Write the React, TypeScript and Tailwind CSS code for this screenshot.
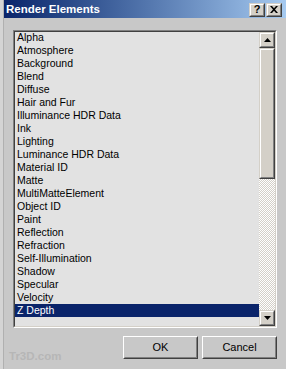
import React from "react";

const items = [
  "Alpha",
  "Atmosphere",
  "Background",
  "Blend",
  "Diffuse",
  "Hair and Fur",
  "Illuminance HDR Data",
  "Ink",
  "Lighting",
  "Luminance HDR Data",
  "Material ID",
  "Matte",
  "MultiMatteElement",
  "Object ID",
  "Paint",
  "Reflection",
  "Refraction",
  "Self-Illumination",
  "Shadow",
  "Specular",
  "Velocity",
  "Z Depth",
];

function Raised({ className = "", children }: { className?: string; children?: React.ReactNode }) {
  return (
    <div className={`border border-t-[#d4d0c8] border-l-[#d4d0c8] border-b-[#404040] border-r-[#404040] ${className}`}>
      <div className="w-full h-full border border-t-white border-l-white border-b-[#808080] border-r-[#808080] bg-[#d4d0c8] flex items-center justify-center">
        {children}
      </div>
    </div>
  );
}

function DlgButton({ label }: { label: string }) {
  return (
    <div className="w-[75px] h-[23px] border border-t-white border-l-white border-b-[#404040] border-r-[#404040]">
      <div className="w-full h-full border border-t-[#c8c8c8] border-l-[#c8c8c8] border-b-[#808080] border-r-[#808080] flex items-center justify-center text-[11px] text-black leading-none">
        {label}
      </div>
    </div>
  );
}

export default function App() {
  return (
    <div
      className="relative w-[286px] h-[369px] flex bg-[#c8c8c8] overflow-hidden"
      style={{ fontFamily: '"Liberation Sans", Arial, sans-serif' }}
    >
      <div className="w-[4px] h-full bg-[#d4d4d4] border-r border-r-[#b0b0b0]" />
      <div className="flex-1 flex flex-col">
        <div className="h-[18px] flex items-center pl-[2px] pr-[4px] bg-gradient-to-r from-[#0a246a] to-[#a6caf0]">
          <div className="flex-1 text-white font-bold text-[11.5px] leading-none pt-[1px]">Render Elements</div>
          <div className="flex gap-[1px] pt-[1px]">
            <Raised className="w-[16px] h-[14px]">
              <span className="text-black font-bold text-[11px] leading-none">?</span>
            </Raised>
            <Raised className="w-[16px] h-[14px]">
              <svg width="8" height="7" viewBox="0 0 8 7">
                <path d="M0 0h2l2 2.2L6 0h2L5 3.5 8 7H6L4 4.8 2 7H0l3-3.5z" fill="#000" />
              </svg>
            </Raised>
          </div>
        </div>
        <div className="flex-1 flex flex-col pt-[12px] pl-[9px] pr-[9px]">
          <div className="h-[298px] border border-t-[#808080] border-l-[#808080] border-b-white border-r-white">
            <div className="w-full h-full border border-t-[#404040] border-l-[#404040] border-b-[#d4d0c8] border-r-[#d4d0c8] flex bg-[#e2e2e2]">
              <div className="flex-1 flex flex-col -mt-[1px]">
                {items.map((it) => (
                  <div
                    key={it}
                    className={`h-[13px] leading-[13px] text-[10.5px] pl-[2px] whitespace-nowrap ${
                      it === "Z Depth" ? "bg-[#0a246a] text-white" : "text-black"
                    }`}
                  >
                    {it}
                  </div>
                ))}
              </div>
              <div className="w-[16px] flex flex-col">
                <Raised className="h-[16px]">
                  <svg width="7" height="4" viewBox="0 0 7 4">
                    <path d="M3.5 0L7 4H0z" fill="#000" />
                  </svg>
                </Raised>
                <Raised className="h-[131px]" />
                <div className="flex-1 [background-image:repeating-conic-gradient(#d4d0c8_0_25%,#ffffff_0_50%)] [background-size:2px_2px]" />
                <Raised className="h-[16px]">
                  <svg width="7" height="4" viewBox="0 0 7 4">
                    <path d="M0 0h7L3.5 4z" fill="#000" />
                  </svg>
                </Raised>
              </div>
            </div>
          </div>
          <div className="flex justify-end gap-[4px] pt-[8px]">
            <DlgButton label="OK" />
            <DlgButton label="Cancel" />
          </div>
        </div>
      </div>
      <div className="absolute left-[9px] top-[351px] text-[11.5px] font-bold leading-none text-[#b6b6b6]">
        Tr3D.com
      </div>
    </div>
  );
}
